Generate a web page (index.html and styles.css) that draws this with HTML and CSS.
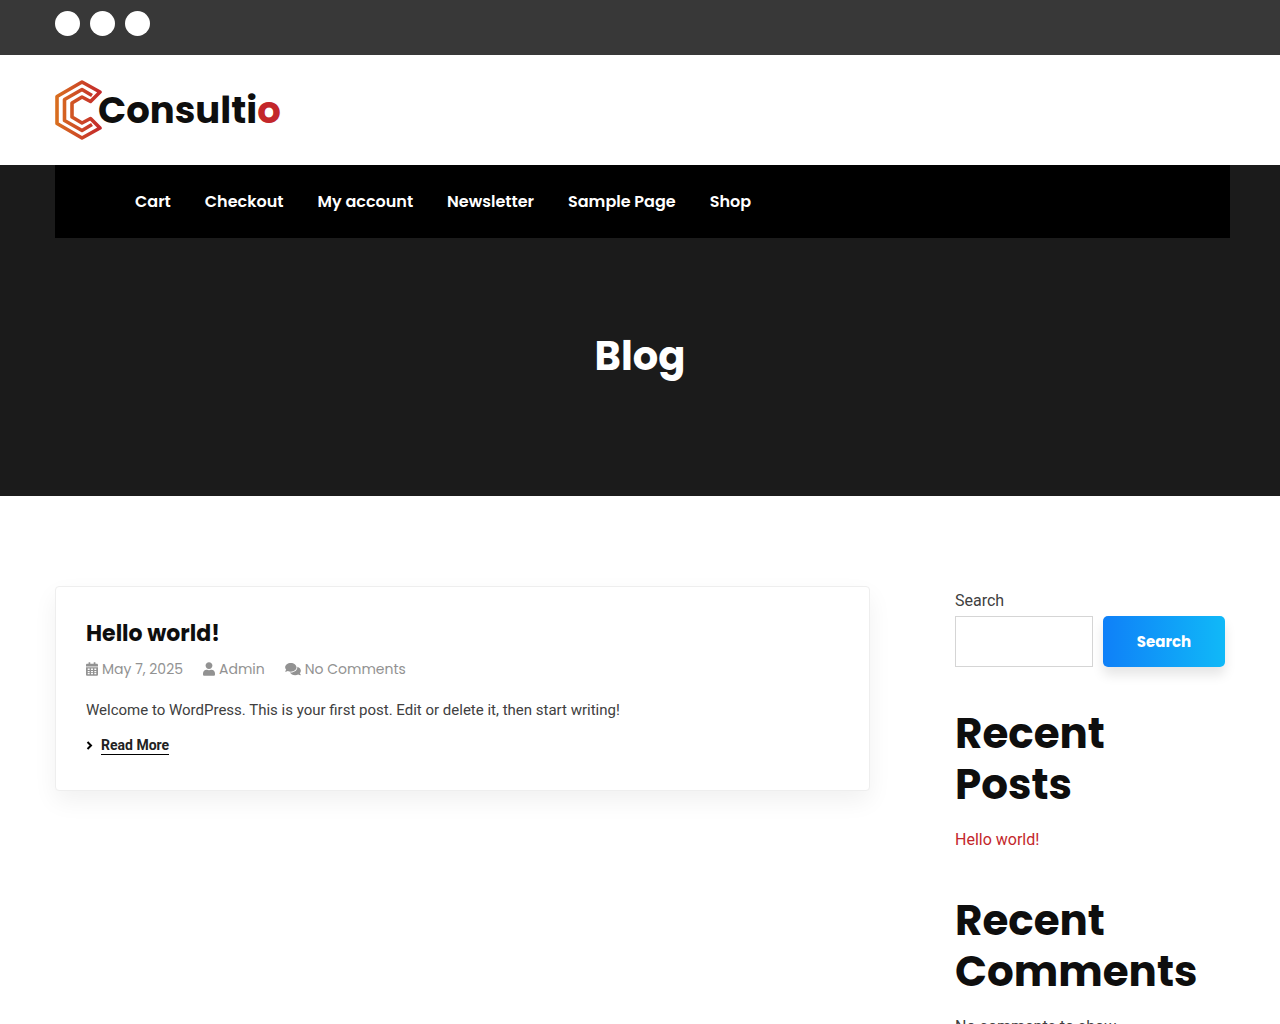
FILE: index.html
```html
<!DOCTYPE html>
<html lang="en">
<head>
    <meta charset="UTF-8">
    <meta name="viewport" content="width=device-width, initial-scale=1.0">
    <title>Blog - Consultio</title>
    <link rel="stylesheet" href="styles.css">
</head>
<body>
<header>
    <div class="top-bar">
        <div class="container social">
            <a href="#" aria-label="Facebook"></a>
            <a href="#" aria-label="Twitter"></a>
            <a href="#" aria-label="LinkedIn"></a>
        </div>
    </div>
    <div class="container branding">
        <a class="logo" href="#">
            <svg class="logo-mark" viewBox="0 0 47 60" aria-hidden="true">
                <defs>
                    <linearGradient id="logoGradient" gradientUnits="userSpaceOnUse" x1="0" y1="30" x2="47" y2="30">
                        <stop offset="0" stop-color="#d9701f"/>
                        <stop offset="1" stop-color="#c3272b"/>
                    </linearGradient>
                </defs>
                <g fill="none" stroke="url(#logoGradient)" stroke-width="3.600" stroke-linejoin="round">
                    <path d="M27 2 2 16.500V43.500L27 58 45 48 35.500 38.500 27 43 17 37V23L27 17 35.500 21.500 45 12Z"/>
                    <path d="M37 15.500 27 9.500 9.500 19.500V40.500L27 50.500 37 44.500"/>
                </g>
            </svg>
            <span class="logo-text">Consulti<span>o</span></span>
        </a>
    </div>
</header>

<section class="hero">
    <div class="nav-wrap">
        <nav>
            <a href="#">Cart</a>
            <a href="#">Checkout</a>
            <a href="#">My account</a>
            <a href="#">Newsletter</a>
            <a href="#">Sample Page</a>
            <a href="#">Shop</a>
        </nav>
    </div>
    <h1>Blog</h1>
</section>

<div class="container content">
    <main>
        <article class="post">
            <h2><a href="#">Hello world!</a></h2>
            <ul class="post-meta">
                <li>
                    <svg width="12" height="14" viewBox="0 0 448 512" aria-hidden="true"><path fill-rule="evenodd" d="M0 464c0 26.500 21.500 48 48 48h352c26.500 0 48-21.500 48-48V192H0zM64 240h72v56H64zm124 0h72v56h-72zm124 0h72v56h-72zM64 328h72v40H64zm124 0h72v40h-72zm124 0h72v40h-72zM64 400h72v56H64zm124 0h72v56h-72zm124 0h72v56h-72zM400 64h-48V16c0-9-7-16-16-16h-32c-9 0-16 7-16 16v48H160V16c0-9-7-16-16-16h-32c-9 0-16 7-16 16v48H48C21 64 0 85 0 112v48h448v-48c0-27-21-48-48-48z"/></svg>
                    <span>May 7, 2025</span>
                </li>
                <li>
                    <svg width="12" height="14" viewBox="0 0 448 512" aria-hidden="true"><path d="M224 256c71 0 128-57 128-128S295 0 224 0 96 57 96 128s57 128 128 128zm90 32h-17c-22 10-47 16-73 16s-51-6-73-16h-17C60 288 0 348 0 422v42c0 27 21 48 48 48h352c27 0 48-21 48-48v-42c0-74-60-134-134-134z"/></svg>
                    <a href="#">Admin</a>
                </li>
                <li>
                    <svg width="16" height="14" viewBox="0 0 576 512" aria-hidden="true"><path d="M416 192c0-88-93-160-208-160S0 104 0 192c0 34 14 66 38 92-13 30-36 55-36 55-2 2-3 6-1 9s4 4 7 4c37 0 67-12 89-25 33 16 71 25 111 25 115 0 208-72 208-160zm122 220c24-26 38-58 38-92 0-67-54-124-130-148 1 6 2 13 2 20 0 106-108 192-240 192-11 0-21-1-32-2 32 57 106 98 192 98 40 0 78-9 111-25 22 13 52 25 89 25 3 0 6-2 7-5s1-6-1-8c0 0-23-25-36-55z"/></svg>
                    <a href="#">No Comments</a>
                </li>
            </ul>
            <p>Welcome to WordPress. This is your first post. Edit or delete it, then start writing!</p>
            <a class="read-more" href="#">
                <svg width="7" height="10" viewBox="0 0 7 10" aria-hidden="true"><path d="M1.500 1 5 4.500 1.500 8" fill="none" stroke="#000" stroke-width="2"/></svg>
                <span>Read More</span>
            </a>
        </article>
    </main>

    <aside>
        <form class="widget" role="search">
            <label for="searchInput">Search</label>
            <div class="search-row">
                <input type="search" id="searchInput">
                <button type="submit">Search</button>
            </div>
        </form>
        <section class="widget">
            <h2>Recent Posts</h2>
            <a href="#">Hello world!</a>
        </section>
        <section class="widget">
            <h2>Recent Comments</h2>
            <p>No comments to show.</p>
        </section>
    </aside>
</div>
</body>
</html>
```

FILE: styles.css
```css
* {
    box-sizing: border-box;
}

body {
    font-family: Roboto, sans-serif;
    font-size: 16px;
    line-height: 28px;
    margin: 0;
    color: #404040;
    background-color: #fff;
}

a {
    color: inherit;
    text-decoration: none;
}

h1,
h2,
nav,
button,
.logo-text,
.post-meta {
    font-family: Poppins, Inter, sans-serif;
}

.container {
    max-width: 1200px;
    margin: 0 auto;
    padding: 0 15px;
}

.top-bar {
    background-color: #383838;
}

.social {
    display: flex;
    gap: 10px;
    padding-top: 11px;
    padding-bottom: 19px;
}

.social a {
    width: 25px;
    height: 25px;
    border-radius: 50%;
    background-color: #fff;
}

.branding {
    padding-top: 25px;
    padding-bottom: 25px;
}

.logo {
    display: inline-flex;
    align-items: center;
    vertical-align: top;
}

.logo-mark {
    width: 47px;
    height: 60px;
    margin-right: -4px;
}

.logo-text {
    font-size: 37px;
    font-weight: 700;
    line-height: 60px;
    color: #0e0e0e;
}

.logo-text span {
    color: #c3272b;
}

.hero {
    background-color: #1b1b1b;
    color: #fff;
    text-align: center;
}

/* menu runs slightly wider than the content on the right */
.nav-wrap {
    max-width: 1200px;
    margin: 0 auto;
    padding: 0 10px 0 15px;
}

nav {
    display: flex;
    flex-wrap: wrap;
    gap: 0 34px;
    padding: 0 80px;
    background-color: #000;
    font-size: 16px;
    font-weight: 600;
    line-height: 73px;
}

.hero h1 {
    margin: 0;
    padding: 88px 15px 110px;
    font-size: 40px;
    line-height: 60px;
}

.content {
    display: grid;
    grid-template-columns: minmax(0, 1fr) 270px;
    gap: 85px;
    padding-top: 90px;
    padding-bottom: 90px;
}

.post {
    padding: 30px;
    border: 1px solid #eee;
    border-radius: 4px;
    background-color: #fff;
    box-shadow: 0 10px 25px rgba(0, 0, 0, 0.06);
}

.post h2 {
    margin: 0;
    font-size: 22px;
    line-height: 34px;
    color: #0e0e0e;
}

.post-meta {
    display: flex;
    flex-wrap: wrap;
    gap: 0 20px;
    margin: 5px 0 14px;
    padding: 0;
    list-style: none;
    font-size: 14px;
    line-height: 26px;
    color: #929292;
}

.post-meta li {
    display: flex;
    align-items: center;
    gap: 4px;
}

.post-meta svg {
    fill: #929292;
}

.post p {
    margin: 0;
    font-size: 15px;
}

.read-more {
    display: inline-flex;
    align-items: center;
    gap: 8px;
    margin: 12px 0 5px;
    font-size: 14px;
    font-weight: 700;
    line-height: 18px;
    vertical-align: top;
    color: #222;
}

.read-more span {
    border-bottom: 1px solid #000;
}

.widget {
    margin-bottom: 41px;
}

.widget label {
    display: block;
    line-height: 30px;
}

.search-row {
    display: flex;
    gap: 10px;
}

.search-row input {
    flex: 1;
    min-width: 0;
    height: 51px;
    padding: 0 10px;
    border: 1px solid #d5d5d5;
    font-size: 16px;
}

.search-row button {
    width: 122px;
    height: 51px;
    border: none;
    border-radius: 5px;
    background: linear-gradient(90deg, #0f80f8, #10b9f8);
    box-shadow: 0 8px 12px rgba(0, 0, 0, 0.1);
    color: #fff;
    font-size: 15px;
    font-weight: 700;
    cursor: pointer;
}

.widget h2 {
    margin: 0 0 16px;
    font-size: 42px;
    line-height: 51px;
    color: #0e0e0e;
}

.widget a {
    color: #c3272b;
}

.widget p {
    margin: 0;
}
```
